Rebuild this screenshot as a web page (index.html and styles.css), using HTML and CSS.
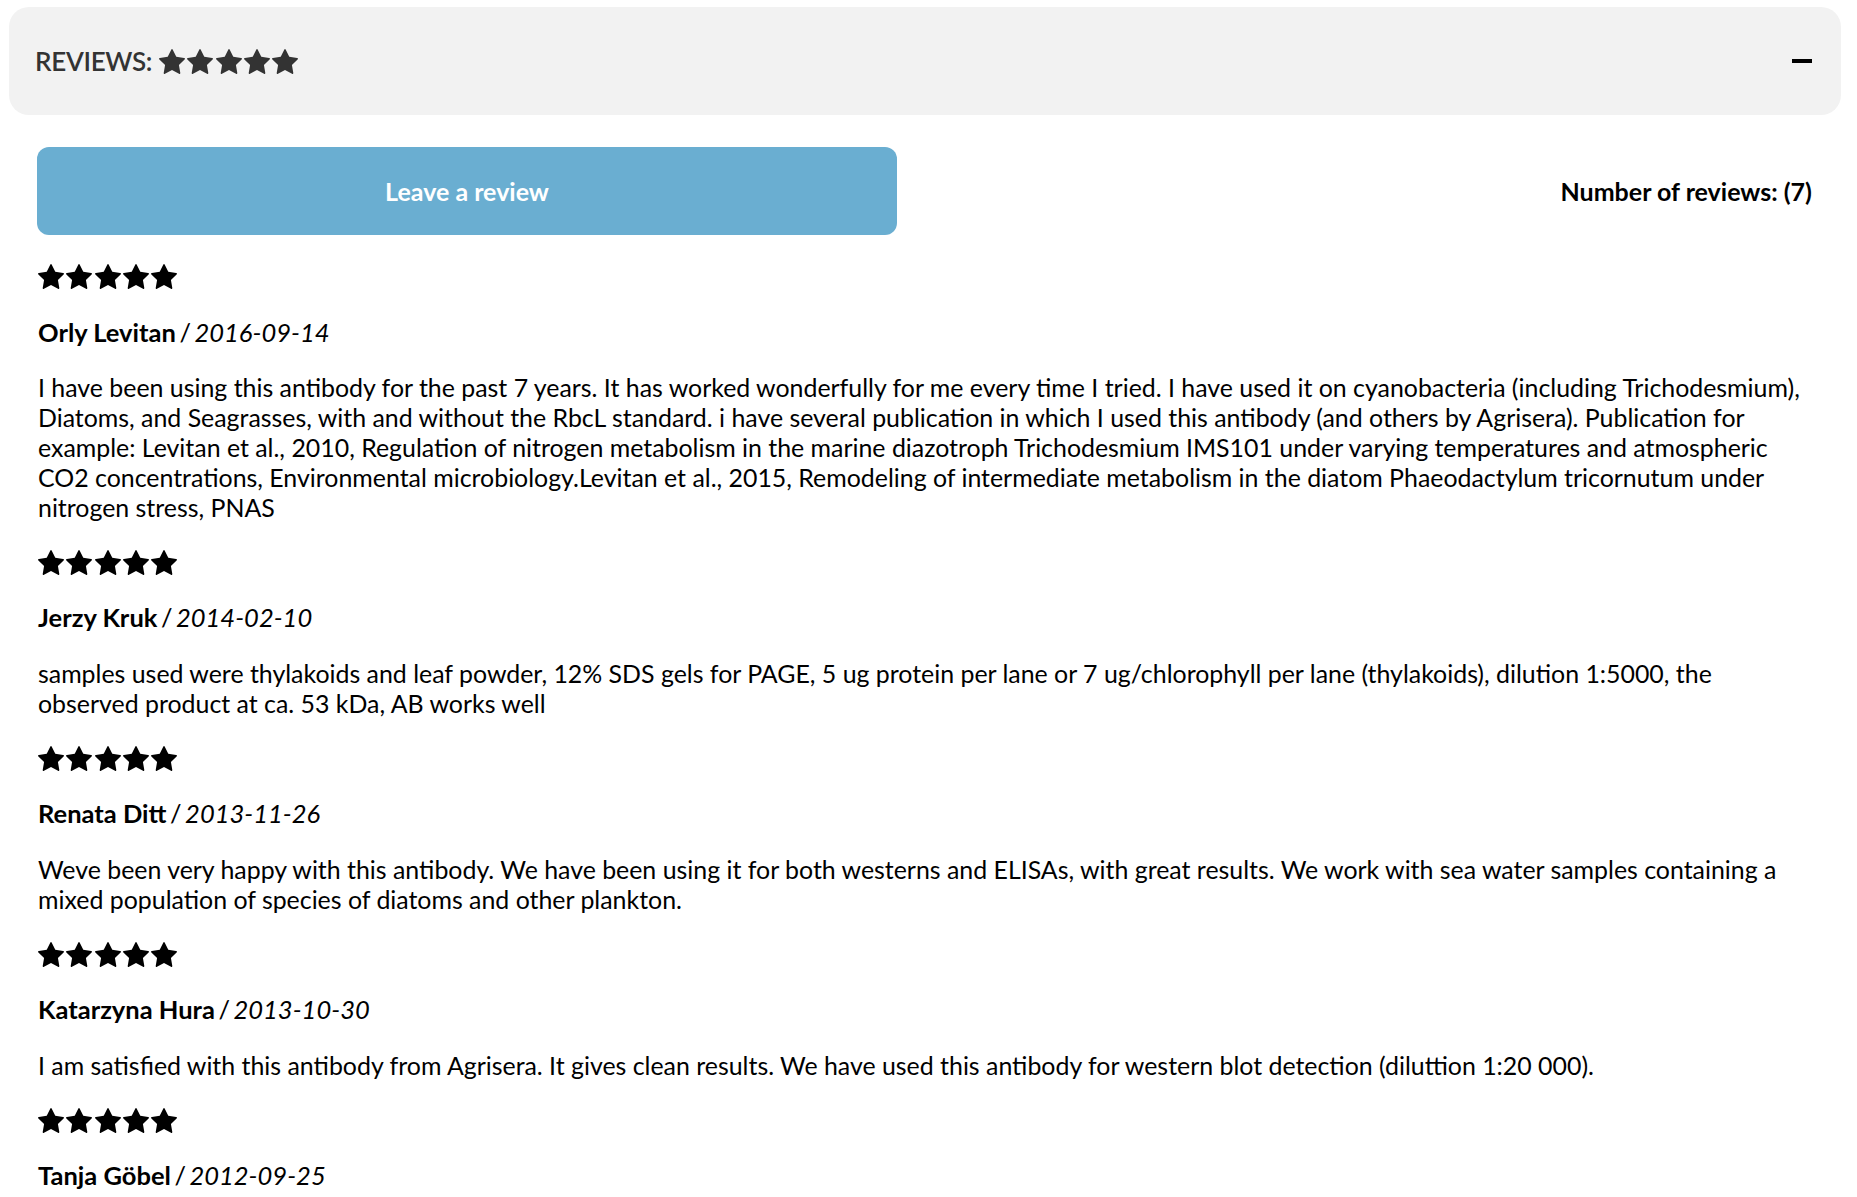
FILE: index.html
```html
<!DOCTYPE html>
<html>
<head>
    <title>Reviews</title>
    <link rel="stylesheet" href="styles.css">
</head>
<body>
    <svg class="sprite" xmlns="http://www.w3.org/2000/svg">
        <symbol id="star" viewBox="0 0 1664 1587">
            <path d="M1664 615q0 22-26 48l-363 354 86 500q1 7 1 20 0 21-10.5 35.5t-30.5 14.5q-19 0-40-12l-449-236-449 236q-22 12-40 12-21 0-31.5-14.5t-10.5-35.5q0-6 2-20l86-500-364-354q-25-27-25-48 0-37 56-46l502-73 225-455q19-41 49-41t49 41l225 455 502 73q56 9 56 46z"/>
        </symbol>
    </svg>

    <div class="reviews">
        <div class="reviews-head">
            <h2 class="reviews-title">
                REVIEWS:
                <span class="stars stars-grey">
                    <svg class="star"><use href="#star"/></svg>
                    <svg class="star"><use href="#star"/></svg>
                    <svg class="star"><use href="#star"/></svg>
                    <svg class="star"><use href="#star"/></svg>
                    <svg class="star"><use href="#star"/></svg>
                </span>
            </h2>
            <span class="toggle"></span>
        </div>

        <div class="reviews-body">
            <div class="reviews-top">
                <a class="btn-review" href="#">Leave a review</a>
                <span class="review-count">Number of reviews: (7)</span>
            </div>

            <div class="review">
                <div class="stars">
                    <svg class="star"><use href="#star"/></svg>
                    <svg class="star"><use href="#star"/></svg>
                    <svg class="star"><use href="#star"/></svg>
                    <svg class="star"><use href="#star"/></svg>
                    <svg class="star"><use href="#star"/></svg>
                </div>
                <p class="review-meta"><strong>Orly Levitan</strong><span class="sep"> / </span><em>2016-09-14</em></p>
                <p class="review-text">I have been using this antibody for the past 7 years. It has worked wonderfully for me every time I tried. I have used it on cyanobacteria (including Trichodesmium), Diatoms, and Seagrasses, with and without the RbcL standard. i have several publication in which I used this antibody (and others by Agrisera). Publication for example: Levitan et al., 2010, Regulation of nitrogen metabolism in the marine diazotroph Trichodesmium IMS101 under varying temperatures and atmospheric CO2 concentrations, Environmental microbiology.Levitan et al., 2015, Remodeling of intermediate metabolism in the diatom Phaeodactylum tricornutum under nitrogen stress, PNAS</p>
            </div>

            <div class="review">
                <div class="stars">
                    <svg class="star"><use href="#star"/></svg>
                    <svg class="star"><use href="#star"/></svg>
                    <svg class="star"><use href="#star"/></svg>
                    <svg class="star"><use href="#star"/></svg>
                    <svg class="star"><use href="#star"/></svg>
                </div>
                <p class="review-meta"><strong>Jerzy Kruk</strong><span class="sep"> / </span><em>2014-02-10</em></p>
                <p class="review-text">samples used were thylakoids and leaf powder, 12% SDS gels for PAGE, 5 ug protein per lane or 7 ug/chlorophyll per lane (thylakoids), dilution 1:5000, the observed product at ca. 53 kDa, AB works well</p>
            </div>

            <div class="review">
                <div class="stars">
                    <svg class="star"><use href="#star"/></svg>
                    <svg class="star"><use href="#star"/></svg>
                    <svg class="star"><use href="#star"/></svg>
                    <svg class="star"><use href="#star"/></svg>
                    <svg class="star"><use href="#star"/></svg>
                </div>
                <p class="review-meta"><strong>Renata Ditt</strong><span class="sep"> / </span><em>2013-11-26</em></p>
                <p class="review-text">Weve been very happy with this antibody. We have been using it for both westerns and ELISAs, with great results. We work with sea water samples containing a mixed population of species of diatoms and other plankton.</p>
            </div>

            <div class="review">
                <div class="stars">
                    <svg class="star"><use href="#star"/></svg>
                    <svg class="star"><use href="#star"/></svg>
                    <svg class="star"><use href="#star"/></svg>
                    <svg class="star"><use href="#star"/></svg>
                    <svg class="star"><use href="#star"/></svg>
                </div>
                <p class="review-meta"><strong>Katarzyna Hura</strong><span class="sep"> / </span><em>2013-10-30</em></p>
                <p class="review-text">I am satisfied with this antibody from Agrisera. It gives clean results. We have used this antibody for western blot detection (diluttion 1:20 000).</p>
            </div>

            <div class="review">
                <div class="stars">
                    <svg class="star"><use href="#star"/></svg>
                    <svg class="star"><use href="#star"/></svg>
                    <svg class="star"><use href="#star"/></svg>
                    <svg class="star"><use href="#star"/></svg>
                    <svg class="star"><use href="#star"/></svg>
                </div>
                <p class="review-meta"><strong>Tanja Göbel</strong><span class="sep"> / </span><em>2012-09-25</em></p>
            </div>
        </div>
    </div>
</body>
</html>
```

FILE: styles.css
```css
body {
    margin: 0;
    font-family: Lato, "Liberation Sans", sans-serif;
    color: #000;
    background-color: #fff;
}

.sprite {
    display: none;
}

.reviews {
    margin: 7px 16px 0 9px;
}

.reviews-head {
    display: flex;
    align-items: center;
    justify-content: space-between;
    height: 108px;
    padding: 0 29px 0 26px;
    background-color: #f2f2f2;
    border-radius: 20px;
}

.reviews-title {
    display: flex;
    align-items: center;
    gap: 7px;
    margin: 0;
    font-size: 26px;
    font-weight: 600;
    letter-spacing: -0.3px;
    color: #333;
}

.toggle {
    width: 20px;
    height: 4px;
    background-color: #000;
}

.reviews-body {
    padding: 0 29px;
}

.reviews-top {
    display: flex;
    align-items: center;
    justify-content: space-between;
    margin: 32px 0 29px;
}

.btn-review {
    display: flex;
    align-items: center;
    justify-content: center;
    width: 860px;
    height: 88px;
    margin-left: -1px;
    background-color: #6aaed1;
    color: #fff;
    font-size: 25px;
    font-weight: bold;
    text-decoration: none;
    border-radius: 12px;
}

.review-count {
    font-size: 25px;
    font-weight: bold;
}

.review {
    margin-bottom: 28.2px;
}

.stars {
    display: flex;
    gap: 2.3px;
}

.star {
    width: 26px;
    height: 25px;
    fill: #000;
}

.stars-grey .star {
    fill: #333;
}

.review-meta {
    margin: 27.5px 0 0;
    font-size: 25.5px;
    line-height: 30px;
}

.review-meta .sep {
    word-spacing: -3px;
}

.review-text {
    margin: 25.3px 0 0;
    font-size: 24.9px;
    line-height: 30px;
}
```
